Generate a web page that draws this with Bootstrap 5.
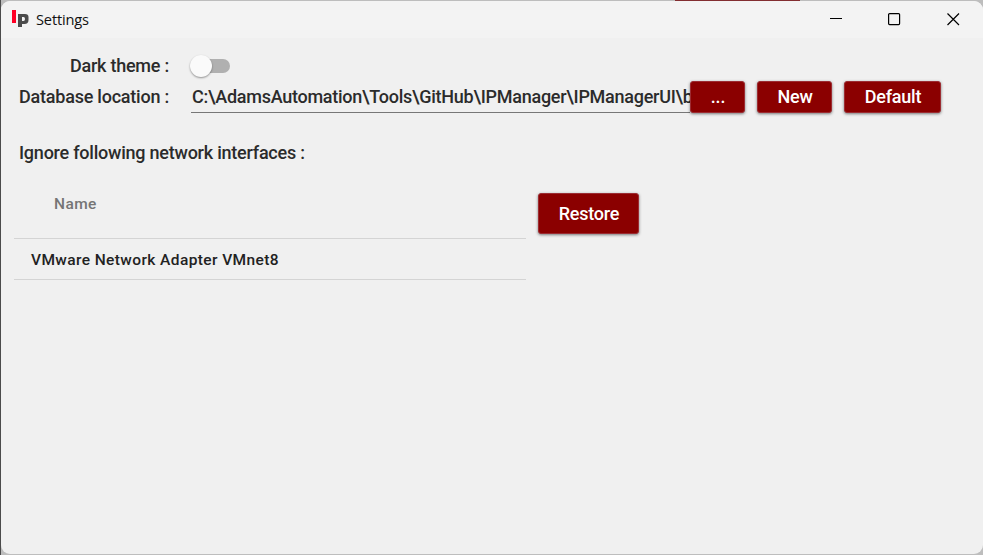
<!DOCTYPE html>
<html lang="en">
<head>
<meta charset="utf-8">
<meta name="viewport" content="width=device-width, initial-scale=1">
<title>Settings</title>
<link href="https://cdn.jsdelivr.net/npm/bootstrap@5.3.0/dist/css/bootstrap.min.css" rel="stylesheet">
<style>
html, body { height: 100%; }
body { background: linear-gradient(90deg, #4b4b4b 0 1px, transparent 1px), #bdbdbd; font-family: Roboto, sans-serif; font-weight: 500; font-size: 18px; line-height: 24px; letter-spacing: -.23px; color: #2b2b2b; padding: 1px 0 1px 1px; position: relative; }
.desk-accent { position: absolute; top: 0; left: 675px; width: 125px; height: 1px; background: #822d30; }
.win { height: 553px; background: #f0f0f0; border-radius: 9px; }
.titlebar { height: 37px; background: #f3f3f3; padding: 0 1px 0 11px; border-radius: 9px 9px 0 0; }
.titlebar h1 { font: 400 14.6px/20px "Open Sans", "Noto Sans", sans-serif; color: #111; letter-spacing: -.15px; margin: 0 0 2px 7px; }
.winbtn { width: 58px; height: 37px; }
.winbtn + .winbtn { margin-left: .5px; }
.content { padding: 12px 0 0 13px; }
.lbl { width: 155px; text-align: right; }
.set-row { height: 31px; }
.set-row + .set-row { height: 32px; }
.toggle { width: 41px; height: 24px; margin-left: 21px; }
.toggle .form-check-input { all: unset; display: block; width: 22px; height: 22px; border-radius: 50%; background: #fafafa; box-shadow: 0 1px 2px rgba(0,0,0,.4); }
.track { width: 32px; height: 14px; border-radius: 7px; background: #b0b0b0; margin-left: -14px; }
.path { width: 499px; height: 32px; margin-left: 22px; border-bottom: 1px solid #777; padding-left: 1px; overflow: hidden; white-space: nowrap; line-height: 32px; letter-spacing: -.26px; }
.acts { gap: 12px; }
.btn-act { --bs-btn-color: #fff; --bs-btn-bg: #8b0000; --bs-btn-border-color: #9c2c32; --bs-btn-hover-bg: #720000; --bs-btn-hover-color: #fff; height: 32px; padding: 0 0 0 1px; border-radius: 3px; font-weight: 500; font-size: 18px; line-height: 30px; letter-spacing: -.22px; box-shadow: 0 1px 3px rgba(0,0,0,.5); flex: none; }
.w-browse { width: 55px; } .w-new { width: 75px; } .w-default { width: 97px; }
.w-restore { width: 101px; height: 41px; line-height: 39px; margin: 28px 0 0 12px; }
.section-title { margin: 28px 0 0 5px; font-weight: 500; font-size: 18px; line-height: 24px; }
.ifaces { width: 512px; --bs-table-bg: transparent; font-size: 15.5px; line-height: 20px; letter-spacing: .4px; color: #222; margin: 0; }
.ifaces th { height: 73px; padding: 29px 0 0 40px; font-weight: 500; color: #757575; vertical-align: top; border-bottom: 1px solid #d4d4d4; }
.ifaces td { height: 41px; padding: 2px 0 0 17px; vertical-align: middle; border-bottom: 1px solid #d4d4d4; color: #222; }
</style>
<script src="https://cdn.jsdelivr.net/npm/bootstrap@5.3.0/dist/js/bootstrap.bundle.min.js" defer></script>
</head>
<body class="overflow-hidden">
<div class="desk-accent"></div>
<div class="win">
  <header class="titlebar d-flex align-items-center">
    <svg width="17" height="19" viewBox="0 0 17 19" aria-hidden="true">
      <path fill="#ff0024" d="M0 0h4v13H0z"/>
      <path fill="#4b4b4b" fill-rule="evenodd" d="M6 4h7q3.500 0 3.500 3v3q0 4-4 4H10v3H6zM10 7v4h1.500q1.500 0 1.500-2t-1.500-2z"/>
    </svg>
    <h1>Settings</h1>
    <div class="d-flex ms-auto">
      <div class="winbtn d-flex align-items-center justify-content-center"><svg width="13" height="13"><path d="M0 5.500h12" stroke="#000"/></svg></div>
      <div class="winbtn d-flex align-items-center justify-content-center"><svg width="13" height="13"><rect x=".6" y=".6" width="11" height="11" rx="1" fill="none" stroke="#000" stroke-width="1.2"/></svg></div>
      <div class="winbtn d-flex align-items-center justify-content-center"><svg width="13" height="13"><path d="M.5.5l11.500 11.500M12 .5l-11.500 11.500" stroke="#000" stroke-width="1.2"/></svg></div>
    </div>
  </header>
  <main class="content">
    <div class="set-row d-flex align-items-center">
      <label class="lbl" for="dark">Dark theme :</label>
      <div class="toggle d-flex align-items-center"><input class="form-check-input position-relative z-1 flex-shrink-0" type="checkbox" role="switch" id="dark"><span class="track flex-shrink-0"></span></div>
    </div>
    <div class="set-row d-flex align-items-center">
      <span class="lbl">Database location :</span>
      <div class="path">C:\AdamsAutomation\Tools\GitHub\IPManager\IPManagerUI\b</div>
      <div class="d-flex acts">
        <button class="btn btn-act w-browse">...</button>
        <button class="btn btn-act w-new">New</button>
        <button class="btn btn-act w-default">Default</button>
      </div>
    </div>
    <h2 class="section-title">Ignore following network interfaces :</h2>
    <div class="d-flex align-items-start">
      <table class="table ifaces">
        <thead><tr><th>Name</th></tr></thead>
        <tbody><tr><td>VMware Network Adapter VMnet8</td></tr></tbody>
      </table>
      <button class="btn btn-act w-restore">Restore</button>
    </div>
  </main>
</div>
</body>
</html>
